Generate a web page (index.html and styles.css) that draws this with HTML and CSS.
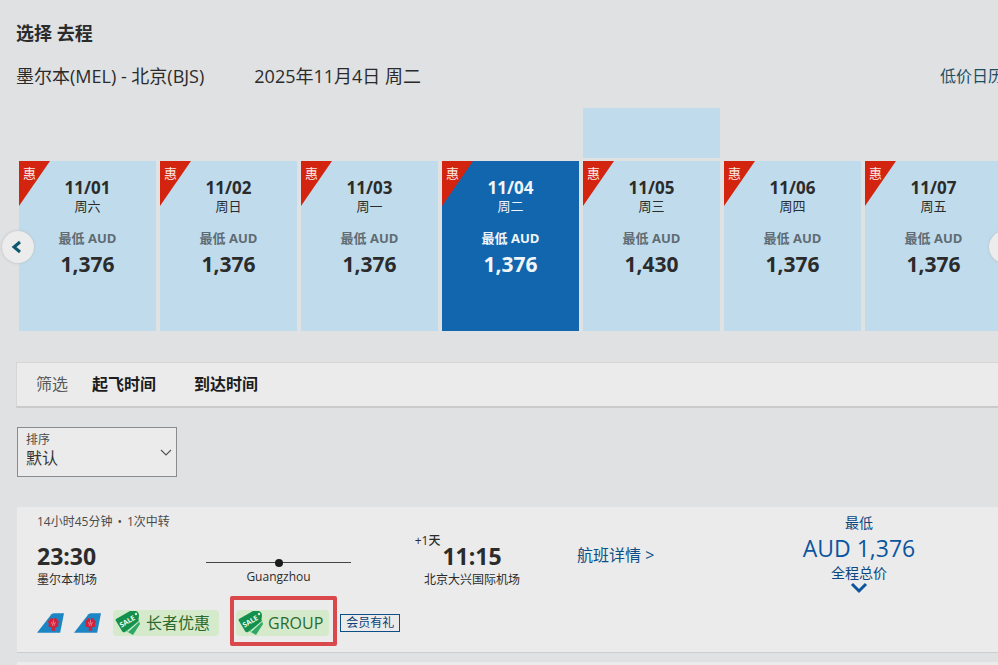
FILE: index.html
```html
<!DOCTYPE html>
<html lang="zh-CN">
<head>
	<meta charset="utf-8">
	<meta name="viewport" content="width=device-width, initial-scale=1">
	<title>选择 去程</title>
	<link rel="stylesheet" href="styles.css">
</head>
<body>
	<svg class="defs" width="0" height="0" aria-hidden="true">
		<symbol id="tail" viewBox="0 0 28 20">
			<path d="M0 20 L15 1 Q16 0 18 0 H28 L24 20 Z" fill="#1c86c4"/>
			<g fill="#d5203a">
				<circle cx="17" cy="11" r="4"/>
				<circle cx="13.500" cy="9" r="2"/>
				<circle cx="20.500" cy="9" r="2"/>
				<circle cx="15" cy="6.500" r="1.700"/>
				<circle cx="19" cy="6.500" r="1.700"/>
				<circle cx="13.500" cy="12.500" r="1.700"/>
				<circle cx="20.500" cy="12.500" r="1.700"/>
				<path d="M16 13 h2 l1 5 h-4 z"/>
			</g>
			<path d="M15 9 l1.500 4 M19 9 l-1.500 4 M17 7 v4" stroke="#f3a9b6" stroke-width=".7"/>
		</symbol>
		<symbol id="sale" viewBox="0 0 26 26">
			<path d="M23 8 L25 14 L18 25 L11 21 Z" fill="#2fa866"/>
			<path d="M1 9 L15 1 L21 1 Q24 2 24 6 L23 11 L10 22 Q8 23 7 21 L1 11 Q0 10 1 9 Z" fill="#14904d"/>
			<path d="M12 21 L24 11 L24 12 L13 22 Z" fill="#d8f0d4"/>
			<circle cx="21" cy="4" r="1.200" fill="#d8f0d4"/>
			<text x="12" y="14" transform="rotate(-31 12 11)" text-anchor="middle" class="sale-text">SALE</text>
		</symbol>
	</svg>

	<main class="page">
		<h1>选择 去程</h1>
		<div class="route">
			<span class="cities">墨尔本(MEL) - 北京(BJS)</span>
			<span>2025年11月4日 周二</span>
			<a class="lowfare" href="#">低价日历</a>
		</div>

		<div class="calendar">
			<div class="days">
				<div class="month"></div>
				<button class="day"><span class="hui">惠</span><b class="date">11/01</b><span class="week">周六</span><span class="cur">最低 AUD</span><b class="fare">1,376</b></button>
				<button class="day"><span class="hui">惠</span><b class="date">11/02</b><span class="week">周日</span><span class="cur">最低 AUD</span><b class="fare">1,376</b></button>
				<button class="day"><span class="hui">惠</span><b class="date">11/03</b><span class="week">周一</span><span class="cur">最低 AUD</span><b class="fare">1,376</b></button>
				<button class="day on"><span class="hui">惠</span><b class="date">11/04</b><span class="week">周二</span><span class="cur">最低 AUD</span><b class="fare">1,376</b></button>
				<button class="day"><span class="hui">惠</span><b class="date">11/05</b><span class="week">周三</span><span class="cur">最低 AUD</span><b class="fare">1,430</b></button>
				<button class="day"><span class="hui">惠</span><b class="date">11/06</b><span class="week">周四</span><span class="cur">最低 AUD</span><b class="fare">1,376</b></button>
				<button class="day"><span class="hui">惠</span><b class="date">11/07</b><span class="week">周五</span><span class="cur">最低 AUD</span><b class="fare">1,376</b></button>
			</div>
			<button class="arrow prev" aria-label="前一周">
				<svg width="14" height="14" viewBox="0 0 14 14"><path d="M9 2 L3 7 L9 12" fill="none" stroke="#0b5870" stroke-width="3"/></svg>
			</button>
			<button class="arrow next" aria-label="后一周">
				<svg width="14" height="14" viewBox="0 0 14 14"><path d="M5 2 L11 7 L5 12" fill="none" stroke="#0b5870" stroke-width="3"/></svg>
			</button>
		</div>

		<div class="filter">
			<span class="name">筛选</span>
			<button>起飞时间</button>
			<button>到达时间</button>
		</div>

		<div class="sort">
			<label for="sort">排序</label>
			<select id="sort">
				<option>默认</option>
			</select>
			<svg class="chev" width="12" height="8" viewBox="0 0 12 8"><path d="M1 1 L6 6 L11 1" fill="none" stroke="#555" stroke-width="1.200"/></svg>
		</div>

		<section class="flight">
			<div class="info">
				<div class="duration"><span>14小时45分钟</span><span>•</span><span>1次中转</span></div>
				<div class="legs">
					<div class="from">
						<b class="time">23:30</b>
						<span class="airport">墨尔本机场</span>
					</div>
					<div class="via">
						<div class="line"></div>
						<span>Guangzhou</span>
					</div>
					<div class="to">
						<b class="time">11:15<span class="plus">+<b>1天</b></span></b>
						<span class="airport">北京大兴国际机场</span>
					</div>
					<a class="detail" href="#">航班详情 &gt;</a>
				</div>
				<div class="tags">
					<svg class="tail" width="27" height="20"><use href="#tail"/></svg>
					<svg class="tail" width="27" height="20"><use href="#tail"/></svg>
					<span class="pill"><svg width="26" height="26"><use href="#sale"/></svg>长者优惠</span>
					<span class="frame"><span class="pill"><svg width="26" height="26"><use href="#sale"/></svg>GROUP</span></span>
					<span class="member">会员有礼</span>
				</div>
			</div>
			<button class="price">
				<span class="small">最低</span>
				<span class="amount">AUD 1,376</span>
				<span class="small">全程总价</span>
				<svg width="18" height="12" viewBox="0 0 18 12"><path d="M2 2 L9 9 L16 2" fill="none" stroke="#0b559f" stroke-width="3"/></svg>
			</button>
		</section>
		<section class="flight"></section>
	</main>
</body>
</html>
```

FILE: styles.css
```css
* {
	box-sizing: border-box;
}

body {
	margin: 0;
	background: #dfe1e3;
	color: #2b2b2b;
	font-family: "Open Sans", "Noto Sans CJK SC", sans-serif;
	font-size: 16px;
	line-height: 20px;
}

button {
	font: inherit;
	color: inherit;
	background: none;
	border: 0;
	padding: 0;
	cursor: pointer;
}

a {
	color: #0b4f86;
	text-decoration: none;
}

.defs {
	position: absolute;
}

.page {
	height: 100vh;
	padding: 20px 0 0 16px;
	overflow: hidden;
}

h1 {
	margin: 0 0 18px;
	font-size: 18px;
	line-height: 26px;
	font-weight: 700;
}

.route {
	display: flex;
	gap: 50px;
	margin-right: -6px;
	font-size: 18px;
	line-height: 24px;
}

.lowfare {
	margin-left: auto;
	font-size: 16px;
	color: #1d4f63;
	white-space: nowrap;
}

/* calendrier des prix */
.calendar {
	position: relative;
	margin: 20px 0 31px 3px;
}

.days {
	display: grid;
	grid-template-columns: repeat(7, 1fr);
	grid-template-rows: 50px 170px;
	gap: 3px 4px;
	margin-right: -4px;
}

.month {
	grid-row: 1;
	grid-column: 5;
	background: #c0dcec;
}

.day {
	position: relative;
	grid-row: 2;
	display: flex;
	flex-direction: column;
	align-items: center;
	padding-top: 16px;
	background: #c0dcec;
}

.day .date {
	font-size: 17px;
	line-height: 22px;
}

.day .week {
	font-size: 13px;
	line-height: 14px;
}

.day .cur {
	margin-top: 16px;
	font-size: 13px;
	line-height: 18px;
	font-weight: 700;
	color: #5f6b73;
}

.day .fare {
	margin-top: 3px;
	font-size: 21px;
	line-height: 28px;
}

.day.on, .day.on .cur {
	background: #1266ae;
	color: #f2f6fa;
}

.hui {
	position: absolute;
	left: 0;
	top: 0;
	width: 31px;
	height: 45px;
	padding: 2px 0 0 4px;
	background: #d2240f;
	clip-path: polygon(0 0, 100% 0, 0 100%);
	color: #fbe9e6;
	font-size: 13px;
	text-align: left;
}

.arrow {
	position: absolute;
	top: 123px;
	width: 32px;
	height: 32px;
	display: flex;
	align-items: center;
	justify-content: center;
	border-radius: 50%;
	background: #ececec;
	box-shadow: 0 0 3px #bbb;
}

.arrow.prev {
	left: -17px;
}

.arrow.next {
	right: -23px;
}

/* filtres */
.filter {
	display: flex;
	align-items: center;
	height: 46px;
	padding: 0 19px 2px;
	background: #ebebeb;
	border: 1px solid #d6d6d6;
	border-right: 0;
	border-bottom: 2px solid #c9cacb;
}

.filter .name {
	margin-right: 24px;
	color: #5a5a5a;
}

.filter button {
	margin-right: 38px;
	font-weight: 700;
	color: #1c1c1c;
}

.sort {
	position: relative;
	display: flex;
	flex-direction: column;
	width: 160px;
	height: 50px;
	margin: 19px 0 30px 1px;
	padding-top: 4px;
	background: #ebebeb;
	border: 1px solid #8b8b8b;
}

.sort label {
	padding-left: 8px;
	font-size: 12px;
	line-height: 16px;
	color: #4a4a4a;
}

.sort select {
	appearance: none;
	width: 100%;
	height: 18px;
	padding: 0 8px;
	border: 0;
	background: none;
	font: inherit;
	color: #333;
}

.chev {
	position: absolute;
	right: 4px;
	top: 21px;
	pointer-events: none;
}

/* vols */
.flight {
	display: flex;
	min-height: 146px;
	margin: 0 0 9px 1px;
	padding-left: 20px;
	background: #ebebeb;
	border-bottom: 1px solid #cccdce;
}

.info {
	flex: 1;
	padding-top: 6px;
}

.duration {
	display: flex;
	gap: 5px;
	font-size: 12px;
	line-height: 18px;
	color: #4a4a4a;
}

.legs {
	display: grid;
	grid-template-columns: 169px 145px 226px 1fr;
	margin-top: 9px;
}

.from, .to {
	display: flex;
	flex-direction: column;
}

.to {
	align-items: center;
	padding-left: 16px;
}

.time {
	position: relative;
	font-size: 23px;
	line-height: 32px;
}

.airport {
	font-size: 12px;
	line-height: 16px;
}

.plus {
	position: absolute;
	right: 100%;
	bottom: 22px;
	margin-right: 2px;
	font-size: 12px;
	line-height: 18px;
	font-weight: 400;
	white-space: nowrap;
}

.plus b {
	font-weight: 500;
}

.via {
	padding-top: 22px;
	text-align: center;
	font-size: 12px;
}

.line {
	display: flex;
	justify-content: center;
	align-items: center;
	height: 1px;
	margin-bottom: 4px;
	background: #444;
}

.line::after {
	content: "";
	width: 8px;
	height: 8px;
	border-radius: 50%;
	background: #1c1c1c;
}

.detail {
	padding-top: 3px;
	line-height: 24px;
}

.tags {
	display: flex;
	align-items: center;
	height: 50px;
	margin-top: 8px;
	padding-top: 4px;
}

.tail {
	margin-right: 10px;
}

.pill {
	display: flex;
	align-items: center;
	gap: 5px;
	height: 26px;
	margin-left: 2px;
	padding: 0 9px 0 2px;
	border-radius: 4px;
	background: #d5eacb;
	color: #2a6a2e;
}

.sale-text {
	font: 700 7px "Open Sans", sans-serif;
	fill: #eefaf0;
}

.frame {
	margin: -4px 3px 0 11px;
	padding: 10px 4px 6px 0;
	border: 4px solid #d9484b;
	border-radius: 2px;
}

.frame .pill {
	gap: 4px;
	padding-right: 6px;
}

.member {
	padding: 0 5px;
	border: 1px solid #0b4f86;
	font-size: 12px;
	line-height: 16px;
	color: #0b3f76;
}

.price {
	display: flex;
	flex-direction: column;
	align-items: center;
	width: 278px;
	padding-top: 7px;
	color: #0b559f;
}

.price .small {
	font-size: 14px;
	line-height: 18px;
	color: #0b4680;
}

.price .amount {
	font-size: 23px;
	line-height: 32px;
}
```
